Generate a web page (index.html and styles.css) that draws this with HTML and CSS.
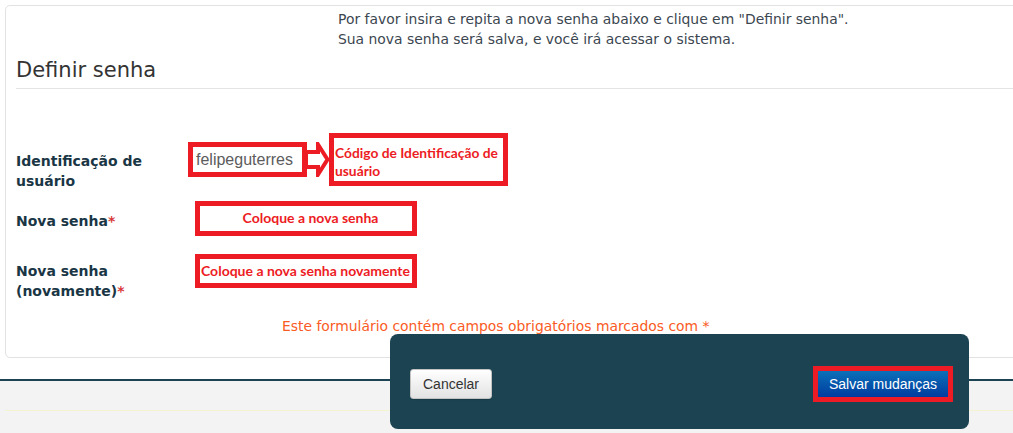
FILE: index.html
```html
<!DOCTYPE html>
<html lang="pt-BR">
<head>
<meta charset="utf-8">
<title>Definir senha</title>
<link rel="stylesheet" href="styles.css">
</head>
<body>
<div class="page">
  <div class="card">
    <div class="intro">
      <p>Por favor insira e repita a nova senha abaixo e clique em "Definir senha".</p>
      <p>Sua nova senha será salva, e você irá acessar o sistema.</p>
    </div>
    <h2 class="title">Definir senha</h2>
    <div class="form">
      <div class="row row-id">
        <div class="label">Identificação de usuário</div>
        <div class="field">
          <span class="userbox">felipeguterres</span>
          <svg class="arrow" width="24" height="35" viewBox="0 0 24 35">
            <path d="M0 10 H12 V2.5 L21.5 17.5 L12 32.5 V25 H0 Z" fill="#fff" stroke="#ed1c24" stroke-width="4" stroke-linejoin="miter"/>
          </svg>
          <span class="note note-id">Código de Identificação de usuário</span>
        </div>
      </div>
      <div class="row row-pass">
        <div class="label">Nova senha<span class="req">*</span></div>
        <div class="field">
          <span class="note note-box note-center">Coloque a nova senha</span>
        </div>
      </div>
      <div class="row row-pass2">
        <div class="label">Nova senha (novamente)<span class="req">*</span></div>
        <div class="field">
          <span class="note note-box">Coloque a nova senha novamente</span>
        </div>
      </div>
    </div>
    <p class="required">Este formulário contém campos obrigatórios marcados com *</p>
  </div>
  <div class="footer">
    <div class="footer-line"></div>
  </div>
  <div class="actions">
    <button class="btn btn-cancel" type="button">Cancelar</button>
    <span class="save-mark"><button class="btn btn-save" type="button">Salvar mudanças</button></span>
  </div>
</div>
</body>
</html>
```

FILE: styles.css
```css
html, body {
  margin: 0;
  padding: 0;
  background: #fff;
  overflow: hidden;
}
body {
  font-family: "DejaVu Sans", Verdana, sans-serif;
  color: #333;
}
.page {
  position: relative;
  width: 1013px;
  height: 433px;
  overflow: hidden;
}
.card {
  margin: 5px 0 0 5px;
  width: 1100px;
  height: 353px;
  box-sizing: border-box;
  border: 1px solid #e2e2e2;
  border-radius: 5px;
  padding: 3px 10px 0 10px;
}
.intro {
  padding-left: 322px;
}
.intro p {
  margin: 0;
  font-size: 13.9px;
  line-height: 20px;
  color: #3b4650;
}
.title {
  margin: 8px 0 0 0;
  font-weight: normal;
  font-size: 21px;
  line-height: 26px;
  color: #333;
  padding-bottom: 5px;
  border-bottom: 1px solid #e3e3e3;
}
.form {
  margin-top: 44px;
}
.row {
  display: grid;
  grid-template-columns: 172px 1fr;
}
.label {
  font-weight: bold;
  font-size: 14px;
  line-height: 20px;
  color: #1a3645;
  width: 150px;
}
.req {
  color: #d9383a;
}
.field {
  display: flex;
  align-items: flex-start;
}
.row-id .label { margin-top: 18px; }
.row-id { height: 56px; }
.userbox {
  margin-top: 9px;
  height: 35px;
  box-sizing: border-box;
  border: 5px solid #ed1c24;
  padding: 0 0 0 3px;
  font-family: "Liberation Sans", Arial, sans-serif;
  font-size: 16px;
  line-height: 25px;
  color: #5c5c5c;
  width: 119px;
  white-space: nowrap;
  overflow: hidden;
}
.arrow {
  margin-top: 9px;
  margin-left: -1px;
  display: block;
}
.note {
  font-family: Lato, "Open Sans", sans-serif;
  font-weight: bold;
  color: #ed1c24;
  font-size: 14px;
  box-sizing: border-box;
  border: 5px solid #ed1c24;
  background: #fff;
}
.note-id {
  width: 179px;
  height: 53px;
  line-height: 18px;
  padding: 6px 0 0 1px;
  margin-left: -1px;
  font-size: 13.8px;
}
.row-pass { margin-top: 12px; height: 35px; }
.row-pass .label { margin-top: 10px; }
.note-box {
  margin-left: 7px;
  width: 222px;
  height: 35px;
  line-height: 23px;
  padding: 0 0 0 1px;
  white-space: nowrap;
}
.note-center {
  text-align: center;
  padding: 0 0 0 9px;
}
.row-pass2 { margin-top: 18px; }
.row-pass2 .label { margin-top: 7px; }
.row-pass2 .note-box { height: 34px; }
.required {
  margin: 15px 0 0 266px;
  font-size: 13.9px;
  line-height: 20px;
  color: #fa5b24;
}
.footer {
  margin-top: 21px;
  border-top: 2px solid #1b4352;
  background: #f3f3f3;
  height: 60px;
}
.footer-line {
  margin: 29px 0 0 5px;
  border-top: 1px solid #f3f3cf;
}
.actions {
  position: absolute;
  left: 390px;
  top: 334px;
  width: 579px;
  height: 95px;
  box-sizing: border-box;
  background: #1b4352;
  border-radius: 8px;
  display: flex;
  justify-content: space-between;
  align-items: center;
  padding: 5px 16px 0 20px;
}
.btn {
  font-family: "Liberation Sans", Arial, sans-serif;
  font-size: 14px;
  cursor: pointer;
}
.btn-cancel {
  width: 82px;
  height: 30px;
  border: 1px solid #c2c2c2;
  border-radius: 3px;
  background: linear-gradient(#ffffff, #e2e2e2);
  color: #333;
  box-shadow: 0 1px 1px rgba(0,0,0,0.15);
  padding: 0;
}
.save-mark {
  display: block;
  border: 5px solid #ed1c24;
  padding: 0;
  line-height: 0;
}
.btn-save {
  width: 130px;
  height: 26px;
  border: 0;
  border-radius: 0;
  background: linear-gradient(#0b70b8, #003c9f);
  color: #fff;
  padding: 0;
}
```
